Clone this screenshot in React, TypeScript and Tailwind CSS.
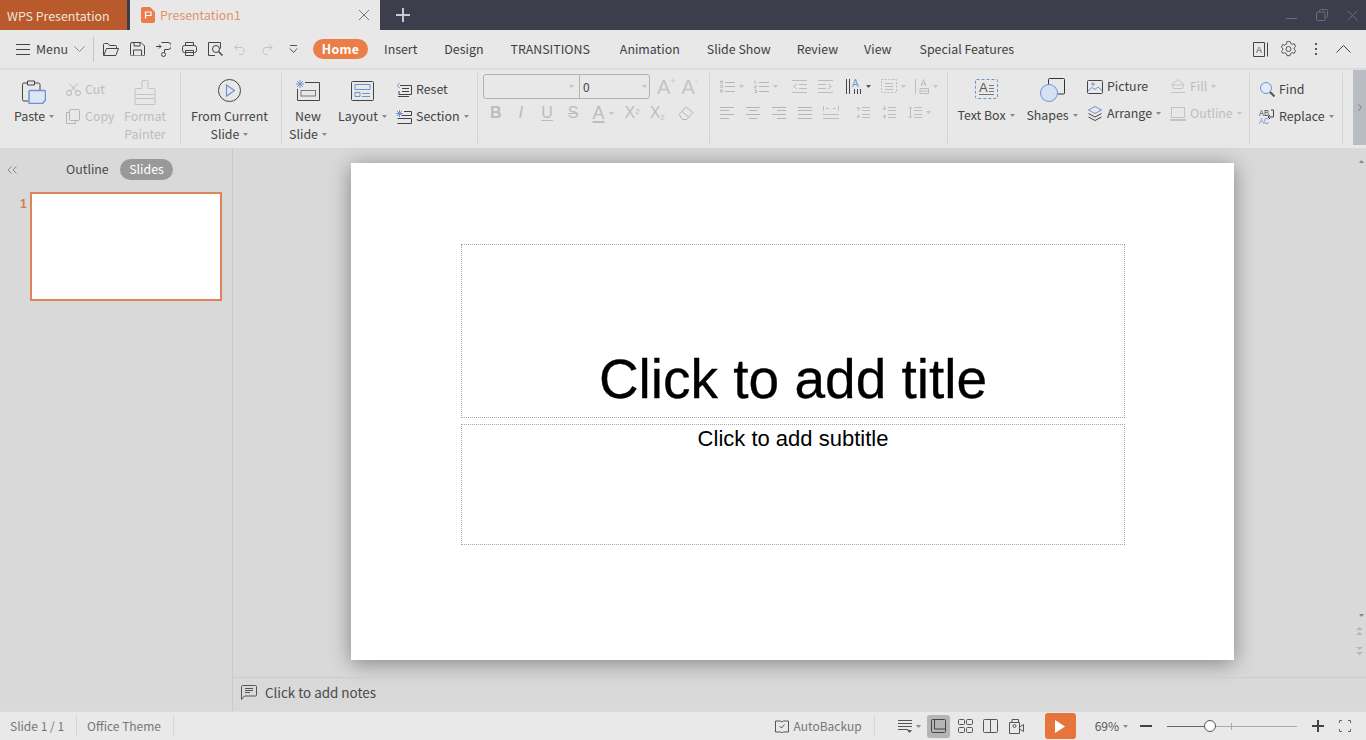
import React from "react";

const Icon = ({ w = 16, h = 16, className = "", children }: any) => (
  <svg width={w} height={h} viewBox={`0 0 ${w} ${h}`} fill="none" stroke="currentColor" strokeWidth="1" className={"shrink-0 " + className}>
    {children}
  </svg>
);

const Caret = ({ className = "text-[#8a8a8a]" }: any) => (
  <svg width="5" height="3" viewBox="0 0 5 3" className={"shrink-0 ml-[4px] " + className}>
    <path d="M0 0h5L2.500 3z" fill="currentColor" />
  </svg>
);

const Tab = ({ label, ml }: any) => <span className={"text-[12.4px] text-[#3f3f3f] " + ml}>{label}</span>;

const Sep = () => <div className="w-px h-[71px] bg-[#d3d3d3] shrink-0" />;

const SmallBtn = ({ icon, label, off, caret }: any) => (
  <div className={"h-[27px] flex items-center text-[12.4px] whitespace-nowrap " + (off ? "text-[#bdbdbd]" : "text-[#444]")}>
    {icon}
    <span className="ml-[4px]">{label}</span>
    {caret && <Caret className={off ? "text-[#c4c4c4]" : "text-[#8a8a8a]"} />}
  </div>
);

const BigBtn = ({ icon, lines, width, caret, off }: any) => (
  <div className={"flex flex-col items-center pt-[5px] text-[12.4px] leading-[18px] shrink-0 " + width + (off ? " text-[#bdbdbd]" : " text-[#444]")}>
    <div className="h-[29px] flex items-start justify-center">{icon}</div>
    {lines.map((l: string, i: number) => (
      <div key={l} className="flex items-center whitespace-nowrap">
        {l}
        {caret && i === lines.length - 1 && <Caret />}
      </div>
    ))}
  </div>
);

// small paragraph glyph made of horizontal lines
const Para = ({ rows, ml }: any) => (
  <Icon w={14} h={13} className={"text-[#b5b5b5] " + ml}>
    {rows.map((r: number[]) => (
      <path key={r[0]} d={`M${r[1]} ${r[0]}.5H${r[2]}`} />
    ))}
  </Icon>
);

export default function App() {
  return (
    <div className="w-screen h-screen overflow-hidden flex flex-col bg-[#d9d9d9] font-['Noto_Sans_CJK_SC','Noto_Sans',sans-serif]">
      {/* title bar */}
      <div className="h-[30px] shrink-0 flex bg-[#3d3e4b]">
        <div className="w-[127px] bg-[#b85a2b] text-[#f2e3da] text-[12.4px] leading-[32px] pl-[7px]">WPS Presentation</div>
        <div className="ml-[3px] w-[250px] bg-[#e8e8e8] flex items-center pl-[11px] pr-[10px]">
          <svg width="14" height="16" viewBox="0 0 14 16" className="shrink-0">
            <path d="M2 0h7l5 5v9a2 2 0 0 1-2 2H2a2 2 0 0 1-2-2V2a2 2 0 0 1 2-2z" fill="#ea7d48" />
            <path d="M4.500 11.500V5h5.500v3.500H4.500" stroke="#fff" strokeWidth="1.200" fill="none" />
          </svg>
          <span className="ml-[5px] text-[12.4px] text-[#e39368]">Presentation1</span>
          <Icon w={12} h={12} className="ml-auto text-[#777]">
            <path d="M1 1l10 10M11 1L1 11" />
          </Icon>
        </div>
        <Icon w={14} h={14} className="ml-[16px] mt-[8px] text-[#c9c9cf]">
          <path d="M7 0v14M0 7h14" strokeWidth="2" />
        </Icon>
        <div className="ml-auto flex items-center text-[#6b6c78] pr-[8px] gap-[19px]">
          <Icon w={11} h={11}>
            <path d="M0 8.500h11" />
          </Icon>
          <Icon w={12} h={12}>
            <path d="M3.500 3V1.500a1 1 0 0 1 1-1h6a1 1 0 0 1 1 1v6a1 1 0 0 1-1 1H9" />
            <rect x="0.500" y="3" width="8.500" height="8.500" rx="1" />
          </Icon>
          <Icon w={11} h={11}>
            <path d="M0.500 0.500l10 10M10.500 0.500l-10 10" />
          </Icon>
        </div>
      </div>

      {/* menu row */}
      <div className="h-[40px] shrink-0 flex items-center bg-[#e8e8e8] border-b-2 border-[#dcdcdc]">
        <Icon w={14} h={11} className="ml-[16px] text-[#444]">
          <path d="M0 .5h14M0 5.500h14M0 10.500h14" />
        </Icon>
        <span className="ml-[6px] w-[31px] text-[12.4px] text-[#444]">Menu</span>
        <Icon w={11} h={6} className="ml-[7px] text-[#888]">
          <path d="M.5.5l5 5 5-5" />
        </Icon>
        <div className="ml-[8px] w-px h-[25px] bg-[#c4c4c4]" />
        <Icon w={16} h={13} className="ml-[9px] text-[#444]">
          <path d="M1 12.500a.5.5 0 0 1-.5-.5V1.500a1 1 0 0 1 1-1h3.500l1.500 2h6a1 1 0 0 1 1 1v1.500M.8 12.500l2.700-7h12l-2.700 7z" />
        </Icon>
        <Icon w={15} h={14} className="ml-[11px] text-[#444]">
          <path d="M.5 2a1.500 1.500 0 0 1 1.500-1.500h9l3.500 3.500v8.500a1.500 1.500 0 0 1-1.500 1.500H2A1.500 1.500 0 0 1 .5 12z" />
          <path d="M3.500 13.500V8h8v5.500M4 .5v3.500h6V.5" />
        </Icon>
        <Icon w={15} h={15} className="ml-[11px] text-[#444]">
          <path d="M0 4.500h5M3 2.500l2 2-2 2" />
          <path d="M5.500.5h6.500a2.500 2.500 0 0 1 0 7H8.500v3" />
          <circle cx="7.500" cy="12.500" r="2" />
        </Icon>
        <Icon w={15} h={14} className="ml-[11px] text-[#444]">
          <rect x=".5" y="3.500" width="14" height="7" rx="2" />
          <path d="M3.500 3.500V.5h8v3M3.500 8.500h8v5h-8z" />
        </Icon>
        <Icon w={15} h={14} className="ml-[11px] text-[#444]">
          <path d="M7 13.500H.5V.5h12v6" />
          <circle cx="8" cy="7" r="3.500" />
          <path d="M10.500 9.500l4 4" strokeWidth="1.500" />
        </Icon>
        <Icon w={13} h={11} className="ml-[11px] text-[#c4c4c4]">
          <path d="M3.500.5L.8 3.500l2.700 3M1 3.500h7a4 4 0 0 1 0 7H5" />
        </Icon>
        <Icon w={13} h={11} className="ml-[13px] text-[#c4c4c4]">
          <path d="M9.500.5l2.700 3-2.700 3M12 3.500H5a4 4 0 0 0 0 7h3" />
        </Icon>
        <Icon w={9} h={9} className="ml-[16px] text-[#555]">
          <path d="M1 .5h7M.8 3.500l3.700 4 3.700-4" />
        </Icon>
        <div className="ml-[15px] w-[55px] h-[20px] rounded-full bg-[#ea7d48] text-white text-[12.4px] font-bold flex items-center justify-center tracking-[0.3px]">Home</div>
        <Tab label="Insert" ml="ml-[16px]" />
        <Tab label="Design" ml="ml-[27px]" />
        <Tab label="TRANSITIONS" ml="ml-[27px]" />
        <Tab label="Animation" ml="ml-[30px]" />
        <Tab label="Slide Show" ml="ml-[27px]" />
        <Tab label="Review" ml="ml-[26px]" />
        <Tab label="View" ml="ml-[26px]" />
        <Tab label="Special Features" ml="ml-[28px]" />
        <div className="ml-auto flex items-center text-[#444] pr-[15px]">
          <Icon w={15} h={15}>
            <path d="M.5.5h11v14H.5zM14.500.5v14" />
            <text x="3" y="11" fontSize="9" fill="#555" stroke="none" fontFamily="Liberation Sans">A</text>
          </Icon>
          <Icon w={15} h={16} className="ml-[13px] text-[#555]">
            <path d="M6 .8h3l.5 2 1.800 1 2-.6 1.300 2.800-1.500 1.400v1.200l1.500 1.400-1.300 2.800-2-.6-1.800 1-.5 2H6l-.5-2-1.800-1-2 .6L.4 10.800l1.500-1.400V8.200L.4 6.800 1.700 4l2 .6 1.800-1z" transform="translate(0 -.5)" />
            <circle cx="7.500" cy="8" r="2.500" />
          </Icon>
          <div className="ml-[19px] flex flex-col gap-[3px]">
            <div className="w-[2px] h-[2px] bg-[#555]" />
            <div className="w-[2px] h-[2px] bg-[#555]" />
            <div className="w-[2px] h-[2px] bg-[#555]" />
          </div>
          <Icon w={15} h={8} className="ml-[19px]">
            <path d="M.5 7.500l7-7 7 7" />
          </Icon>
        </div>
      </div>

      {/* ribbon */}
      <div className="h-[78px] shrink-0 flex items-start bg-[#e8e8e8] pt-[3px]">
        {/* clipboard */}
        <div className="w-[180px] flex shrink-0">
          <BigBtn
            width="w-[42px] ml-[13px]"
            caret
            lines={["Paste"]}
            icon={
              <Icon w={24} h={24} className="text-[#444] mt-[2px]">
                <path d="M5 3H2a1.500 1.500 0 0 0-1.500 1.500v15A1.500 1.500 0 0 0 2 21h4" />
                <path d="M13 3h3.500A1.500 1.500 0 0 1 18 4.500V10M5.500 1h7v4h-7z" />
                <path d="M7 11.500a1 1 0 0 1 1-1h14.500a1 1 0 0 1 1 1V20l-3 3.500H8a1 1 0 0 1-1-1z" fill="#dce6f6" stroke="#6f93cf" strokeWidth="1.500" />
              </Icon>
            }
          />
          <div className="ml-[11px] w-[57px] shrink-0 pt-[3px]">
            <SmallBtn
              off
              label="Cut"
              icon={
                <Icon w={15} h={13} className="text-[#b5b5b5]">
                  <circle cx="3" cy="10" r="2.500" />
                  <circle cx="12" cy="10" r="2.500" />
                  <path d="M4.500 8L12 .5M10.500 8L3 .5" />
                </Icon>
              }
            />
            <SmallBtn
              off
              label="Copy"
              icon={
                <Icon w={14} h={15} className="text-[#b5b5b5] mr-[1px]">
                  <rect x="3.500" y=".5" width="10" height="11" rx="1" />
                  <path d="M3.500 3.500H.5v11h9v-3" />
                </Icon>
              }
            />
          </div>
          <BigBtn
            off
            width="w-[44px]"
            lines={["Format", "Painter"]}
            icon={
              <Icon w={22} h={25} className="text-[#c4c4c4] mt-[2px]">
                <path d="M8 8.500V1.500a1 1 0 0 1 1-1h4a1 1 0 0 1 1 1v7h6a1 1 0 0 1 1 1v5H1v-5a1 1 0 0 1 1-1zM1 14.500v10h20v-10M1 18.500h20" />
              </Icon>
            }
          />
        </div>
        <Sep />
        {/* slide show */}
        <div className="w-[100px] flex justify-center pr-[3px] shrink-0">
          <BigBtn
            width="w-[80px]"
            caret
            lines={["From Current", "Slide"]}
            icon={
              <Icon w={23} h={23} className="text-[#444] mt-[1px]">
                <circle cx="11.500" cy="11.500" r="11" />
                <path d="M8.500 6l8 5.500-8 5.500z" stroke="#6f93cf" strokeWidth="1.200" />
              </Icon>
            }
          />
        </div>
        <Sep />
        {/* slides */}
        <div className="w-[195px] flex shrink-0">
          <BigBtn
            width="w-[36px] ml-[8px]"
            caret
            lines={["New", "Slide"]}
            icon={
              <Icon w={24} h={21} className="text-[#444] mt-[2px]">
                <path d="M9 2.500h14.500v18H1.500V9" />
                <rect x="5" y="10.500" width="14.500" height="5.500" stroke="#777" />
                <path d="M4 0v8M0 4h8M1 1l6 6M7 1L1 7" stroke="#6f93cf" />
              </Icon>
            }
          />
          <BigBtn
            width="w-[47px] ml-[13px]"
            caret
            lines={["Layout"]}
            icon={
              <Icon w={23} h={20} className="text-[#444] mt-[3px]">
                <rect x=".5" y=".5" width="22" height="19" rx="1" />
                <path d="M4 3.500h15v5H4zM4 11.500h5v4H4zM11 12.500h8M11 15.500h8" stroke="#6f93cf" />
              </Icon>
            }
          />
          <div className="ml-[10px] pt-[3px] shrink-0">
            <SmallBtn
              label="Reset"
              icon={
                <Icon w={16} h={14} className="text-[#444]">
                  <path d="M4 2.500h11.500v9H3V8" />
                  <path d="M6 5.500h7M6 8.500h7M2 13.500h11" />
                  <path d="M3.500 0L1.500 2.500 3.500 5" stroke="#6f93cf" />
                </Icon>
              }
            />
            <SmallBtn
              caret
              label="Section"
              icon={
                <Icon w={16} h={14} className="text-[#444]">
                  <path d="M8 1.500h7.500v4H6M1.500 8.500h14v5H1.500" />
                  <path d="M3.500 0v7M0 3.500h7M1 1l5 5M6 1L1 6" stroke="#6f93cf" />
                </Icon>
              }
            />
          </div>
        </div>
        <Sep />
        {/* font */}
        <div className="w-[231px] shrink-0 pl-[5px] pt-[1px]">
          <div className="flex items-center">
            <div className="w-[167px] h-[25px] border border-[#b3b3b3] rounded-[3px] flex text-[12px] text-[#444] shrink-0">
              <div className="w-[96px] border-r border-[#b3b3b3] flex items-center justify-end pr-[5px]">
                <Caret className="text-[#c4c4c4]" />
              </div>
              <div className="flex-1 flex items-center pl-[3px]">
                0<Caret className="ml-auto mr-[2px] text-[#c4c4c4]" />
              </div>
            </div>
            <span className="ml-[7px] text-[#c4c4c4] text-[20px] leading-[20px] font-['Liberation_Sans',sans-serif] flex items-start">
              A<span className="text-[9px] leading-[9px]">+</span>
            </span>
            <span className="ml-[6px] text-[#c4c4c4] text-[20px] leading-[20px] font-['Liberation_Sans',sans-serif] flex items-start">
              A<span className="text-[9px] leading-[9px]">-</span>
            </span>
          </div>
          <div className="h-[26px] mt-[1px] flex items-center text-[#bdbdbd] font-['Liberation_Sans',sans-serif] text-[16px]">
            <span className="ml-[7px] font-bold">B</span>
            <span className="ml-[17px] italic text-[17px]">I</span>
            <span className="ml-[18px] underline underline-offset-2">U</span>
            <span className="ml-[15px] line-through">S</span>
            <span className="ml-[14px] text-[18px] underline decoration-2 underline-offset-2">A</span>
            <Caret className="text-[#c4c4c4]" />
            <span className="ml-[11px]">
              X<sup className="text-[8px]">2</sup>
            </span>
            <span className="ml-[10px]">
              X<sub className="text-[8px]">2</sub>
            </span>
            <Icon w={16} h={14} className="ml-[13px] text-[#b5b5b5]">
              <path d="M1 8.500l7-7.500 7 5.500-6.500 7H4.500zM4 5.500l6.500 5.500" />
            </Icon>
          </div>
        </div>
        <Sep />
        {/* paragraph */}
        <div className="w-[237px] shrink-0 pl-[10px] pt-[3px]">
          <div className="h-[20px] flex items-center">
            <Icon w={15} h={13} className="text-[#b5b5b5]">
              <circle cx="1.500" cy="2" r="1.300" />
              <circle cx="1.500" cy="6.500" r="1.300" />
              <circle cx="1.500" cy="11" r="1.300" />
              <path d="M5 2.500h10M5 6.500h10M5 11.500h10" />
            </Icon>
            <Caret className="text-[#c4c4c4]" />
            <Icon w={15} h={13} className="ml-[10px] text-[#b5b5b5]">
              <path d="M1 .5v3M.5 6h2l-2 2h2M.5 10.500h2v2h-2M5 2.500h10M5 6.500h10M5 11.500h10" />
            </Icon>
            <Caret className="text-[#c4c4c4]" />
            <Icon w={15} h={13} className="ml-[14px] text-[#bdbdbd]">
              <path d="M0 .5h15M7 4.500h8M7 8.500h8M0 12.500h15M5 4L1.500 6.500 5 9" />
            </Icon>
            <Icon w={15} h={13} className="ml-[11px] text-[#bdbdbd]">
              <path d="M0 .5h15M0 4.500h8M0 8.500h8M0 12.500h15M10 4l3.500 2.500L10 9" />
            </Icon>
            <Icon w={16} h={15} className="ml-[13px] text-[#444]">
              <path d="M.5 0v15M3.500 0v15M8.500 10v5M11.500 10v5M14.500 10v5" />
              <text x="6" y="8" fontSize="10" fill="#6f93cf" stroke="none" fontFamily="Liberation Sans">A</text>
            </Icon>
            <Caret className="text-[#555]" />
            <Icon w={16} h={14} className="ml-[10px] text-[#bdbdbd]">
              <path d="M.5.5h15v13H.5z" strokeDasharray="2 1.500" />
              <path d="M4 4.500h8M4 7.500h8M4 10.500h8" />
            </Icon>
            <Caret className="text-[#c4c4c4]" />
            <Icon w={14} h={15} className="ml-[9px] text-[#bdbdbd]">
              <path d="M.5 0v15M6 7l2.500-6.500L11 7M6.500 5h4M5 9.500h8.500v5H5zM5 12h8.500" />
            </Icon>
            <Caret className="text-[#c4c4c4]" />
          </div>
          <div className="h-[14px] mt-[9px] flex items-center">
            <Para ml="" rows={[[1, 0, 14], [4, 0, 9], [8, 0, 14], [12, 0, 9]]} />
            <Para ml="ml-[12px]" rows={[[1, 0, 14], [4, 3, 11], [8, 0, 14], [12, 3, 11]]} />
            <Para ml="ml-[12px]" rows={[[1, 0, 14], [4, 5, 14], [8, 0, 14], [12, 5, 14]]} />
            <Para ml="ml-[12px]" rows={[[1, 0, 14], [4, 0, 14], [8, 0, 14], [12, 0, 14]]} />
            <Icon w={16} h={13} className="ml-[11px] text-[#bdbdbd]">
              <path d="M.5 0v5M15.500 0v5M3 2.500h3M13 2.500h-3M0 8.500h16M0 12.500h16" />
            </Icon>
            <Icon w={14} h={13} className="ml-[17px] text-[#bdbdbd]">
              <path d="M2.500 1v4M.8 2.800l1.700-1.800 1.700 1.800M2.500 8v4M.8 10.200l1.700 1.800 1.700-1.800M6 1.500h8M6 4.500h8M6 8.500h8M6 11.500h8" />
            </Icon>
            <Icon w={14} h={13} className="ml-[12px] text-[#bdbdbd]">
              <path d="M2.500 0v4M.8 2.200l1.700 1.800 1.700-1.800M2.500 13V9M.8 10.800l1.700-1.800 1.700 1.800M6 1.500h8M6 4.500h8M6 8.500h8M6 11.500h8" />
            </Icon>
            <Icon w={14} h={13} className="ml-[12px] text-[#bdbdbd]">
              <path d="M2.500 1v11M.8 2.800l1.700-1.800 1.700 1.800M.8 10.200l1.700 1.800 1.700-1.800M6 1.500h8M6 4.500h8M6 8.500h8M6 11.500h8" />
            </Icon>
            <Caret className="text-[#c4c4c4]" />
          </div>
        </div>
        <Sep />
        {/* insert */}
        <div className="w-[301px] flex shrink-0 -mt-[1px]">
          <BigBtn
            width="w-[58px] ml-[9px]"
            caret
            lines={["Text Box"]}
            icon={
              <Icon w={24} h={21} className="mt-[2px] ml-[1px] text-[#6f93cf]">
                <rect x=".5" y=".5" width="22" height="19" rx="1" strokeDasharray="3 2" />
                <text x="4" y="13" fontSize="13" fill="#555" stroke="none" fontFamily="Liberation Sans">A</text>
                <path d="M14 6.500h5M14 9.500h5M14 12.500h5M4 15.500h15" stroke="#777" />
              </Icon>
            }
          />
          <BigBtn
            width="w-[50px] ml-[12px]"
            caret
            lines={["Shapes"]}
            icon={
              <Icon w={25} h={24} className="text-[#333] mt-px">
                <path d="M8.500 7V1.500a1 1 0 0 1 1-1h14a1 1 0 0 1 1 1V15a1 1 0 0 1-1 1H18" />
                <circle cx="9" cy="15" r="8.500" fill="#d5e0f2" stroke="#6f93cf" />
              </Icon>
            }
          />
          <div className="ml-[10px] w-[83px] shrink-0 pt-[1px]">
            <SmallBtn
              label="Picture"
              icon={
                <Icon w={16} h={14} className="text-[#444]">
                  <rect x=".5" y=".5" width="15" height="13" rx="1" />
                  <circle cx="6" cy="4" r="1.200" stroke="#6f93cf" />
                  <path d="M1 11l4-3.500 3 2 3-2.500 4 3.500" stroke="#6f93cf" />
                </Icon>
              }
            />
            <SmallBtn
              caret
              label="Arrange"
              icon={
                <Icon w={16} h={15} className="text-[#444]">
                  <path d="M8 .5L14.500 4 8 7.500 1.500 4z" stroke="#6f93cf" />
                  <path d="M1.500 7.500L8 11l6.500-3.500M1.500 11L8 14.500l6.500-3.500" />
                </Icon>
              }
            />
          </div>
          <div className="shrink-0 pt-[1px]">
            <SmallBtn
              off
              caret
              label="Fill"
              icon={
                <Icon w={16} h={15} className="text-[#c4c4c4]">
                  <path d="M8 .5l6 5-1.500 4h-9L2 5.500zM2 6h12M1 13.500h14" />
                </Icon>
              }
            />
            <SmallBtn
              off
              caret
              label="Outline"
              icon={
                <Icon w={16} h={14} className="text-[#c4c4c4]">
                  <rect x="1.500" y=".5" width="13" height="10" />
                  <path d="M0 13h16" strokeWidth="2" />
                </Icon>
              }
            />
          </div>
        </div>
        <Sep />
        {/* find */}
        <div className="w-[92px] shrink-0 pl-[10px] pt-[3px]">
          <SmallBtn
            label="Find"
            icon={
              <Icon w={15} h={15} className="text-[#6f93cf]">
                <circle cx="6" cy="6" r="5.500" fill="#e3ebf7" />
                <path d="M10 10l4.500 4.500" stroke="#555" strokeWidth="2" />
              </Icon>
            }
          />
          <SmallBtn
            caret
            label="Replace"
            icon={
              <Icon w={16} h={17} className="text-[#444] -ml-[1px]">
                <text x="0" y="8" fontSize="9" textLength="10" lengthAdjust="spacingAndGlyphs" fill="#444" stroke="none" fontFamily="Liberation Sans">AB</text>
                <text x="0" y="16" fontSize="9" textLength="10" lengthAdjust="spacingAndGlyphs" fill="#6f93cf" stroke="none" fontFamily="Liberation Sans">AC</text>
                <path d="M12 2h2.500v7H9M11 7L9 9l2 2" />
              </Icon>
            }
          />
        </div>
        <Sep />
        <div className="ml-auto w-[13px] h-[75px] -mt-[3px] bg-[#babcc4] flex items-center justify-center text-[#777]">
          <Icon w={4} h={7}>
            <path d="M.5.5l3 3-3 3" />
          </Icon>
        </div>
      </div>

      {/* body */}
      <div className="flex-1 min-h-0 flex">
        <aside className="w-[233px] shrink-0 border-r border-[#c9c9c9] pt-[11px]">
          <div className="h-[21px] flex items-center text-[12.4px]">
            <Icon w={10} h={8} className="ml-[7px] text-[#8a8a8a]">
              <path d="M4.500.5L1 4l3.500 3.500M9.500.5L6 4l3.500 3.500" />
            </Icon>
            <span className="ml-[49px] w-[40px] text-[#4a4a4a]">Outline</span>
            <span className="ml-[14px] w-[53px] h-[21px] rounded-full bg-[#999] text-white flex items-center justify-center">Slides</span>
          </div>
          <div className="mt-[12px] flex items-start">
            <span className="ml-[20px] w-[10px] text-[12px] font-bold leading-[24px] text-[#d27c50] font-['Liberation_Sans',sans-serif]">1</span>
            <div className="w-[192px] h-[109px] bg-white border-2 border-[#dd845a]" />
          </div>
        </aside>
        <main className="flex-1 min-w-0 flex flex-col">
          <div className="flex-1 min-h-0 flex">
            <div className="flex-1 min-w-0 pt-[15px] pl-[118px]">
              <div className="w-[883px] h-[497px] bg-white shadow-[0_3px_20px_rgba(0,0,0,0.4)] pt-[81px] pl-[110px]">
                <div className="w-[664px] h-[174px] border border-dotted border-[#a5a5a5] flex items-end justify-center pb-[7px] font-['Liberation_Sans',sans-serif] text-[55px] leading-[62px] text-black [-webkit-text-stroke:0.3px_black]">
                  Click to add title
                </div>
                <div className="mt-[6px] w-[664px] h-[121px] border border-dotted border-[#a5a5a5] pt-px text-center font-['Liberation_Sans',sans-serif] text-[22px] leading-[26px] text-black">
                  Click to add subtitle
                </div>
              </div>
            </div>
            <div className="w-[13px] shrink-0 flex flex-col items-center pt-[12px]">
              <Caret className="text-[#888] ml-0 rotate-180" />
              <Caret className="text-[#888] ml-0 mt-[451px]" />
              <Icon w={7} h={10} className="mt-[10px] text-[#b5b5b5]">
                <path d="M3.500 0L7 3H0zM3.500 5L7 8H0z" fill="currentColor" stroke="none" />
              </Icon>
              <Icon w={7} h={10} className="mt-[8px] text-[#b5b5b5]">
                <path d="M0 2h7L3.500 5zM0 7h7L3.500 10z" fill="currentColor" stroke="none" />
              </Icon>
            </div>
          </div>
          <div className="h-[34px] shrink-0 border-t border-[#cccccc] flex items-center pb-[5px] text-[13.4px] text-[#4a4a4a]">
            <Icon w={16} h={15} className="ml-[8px] text-[#555]">
              <path d="M.5 14.500V1.500a1 1 0 0 1 1-1h13a1 1 0 0 1 1 1V10a1 1 0 0 1-1 1H3.500z" />
              <path d="M4 3.500h8M4 5.500h8M4 7.500h5" />
            </Icon>
            <span className="ml-[8px]">Click to add notes</span>
          </div>
        </main>
      </div>

      {/* status bar */}
      <div className="h-[29px] shrink-0 bg-[#e9e9e9] border-t border-[#dcdcdc] flex items-center text-[12px] text-[#777]">
        <span className="ml-[10px]">Slide 1 / 1</span>
        <div className="ml-[12px] w-px h-[22px] bg-[#d6d6d6]" />
        <span className="ml-[10px]">Office Theme</span>
        <div className="ml-[12px] w-px h-[22px] bg-[#d6d6d6]" />
        <div className="ml-auto flex items-center pr-[15px]">
          <Icon w={14} h={13} className="text-[#555]">
            <path d="M.5 1h5l1.500 1 1.500-1h5v11h-5l-1.500 1-1.500-1h-5z" />
            <path d="M4.500 6l2 2 3-3.500" />
          </Icon>
          <span className="ml-[5px]">AutoBackup</span>
          <div className="ml-[12px] w-px h-[22px] bg-[#d6d6d6]" />
          <Icon w={14} h={13} className="ml-[23px] text-[#555]">
            <path d="M0 .5h14M0 3.500h14M0 6.500h14M0 9.500h10" />
            <path d="M9 10h5l-2.500 3z" fill="currentColor" stroke="none" />
          </Icon>
          <Caret />
          <div className="ml-[6px] w-[23px] h-[23px] rounded-[3px] bg-[#b5b5b5] flex items-center justify-center text-[#444]">
            <Icon w={15} h={14}>
              <rect x=".5" y=".5" width="14" height="13" rx="1" />
              <path d="M3.500.5v9.500h11" />
            </Icon>
          </div>
          <Icon w={15} h={14} className="ml-[8px] text-[#555]">
            <rect x=".5" y=".5" width="6" height="5" rx="1" />
            <rect x="8.500" y=".5" width="6" height="5" rx="1" />
            <rect x=".5" y="8.500" width="6" height="5" rx="1" />
            <rect x="8.500" y="8.500" width="6" height="5" rx="1" />
          </Icon>
          <Icon w={15} h={14} className="ml-[10px] text-[#555]">
            <rect x=".5" y=".5" width="14" height="13" rx="1" />
            <path d="M7.500.5v13" />
          </Icon>
          <Icon w={15} h={16} className="ml-[11px] text-[#555]">
            <path d="M3 4V1.500h6.500V4M.5 4.500h10v11H.5zM10.500 9l4-2.500v7l-4-2.500" />
            <circle cx="5.500" cy="8" r="1.500" />
          </Icon>
          <div className="ml-[21px] w-[31px] h-[26px] rounded-[3px] bg-[#e8743d] flex items-center justify-center">
            <svg width="10" height="13" viewBox="0 0 10 13">
              <path d="M0 0l10 6.500L0 13z" fill="#fff" />
            </svg>
          </div>
          <span className="ml-[19px] text-[#555]">69%</span>
          <Caret />
          <div className="ml-[12px] w-[12px] h-[2px] bg-[#444]" />
          <div className="ml-[15px] w-[130px] h-[13px] flex items-center">
            <div className="w-[37px] h-px bg-[#666]" />
            <div className="w-[12px] h-[12px] rounded-full border border-[#555] bg-white shrink-0" />
            <div className="w-[15px] h-px bg-[#aaa]" />
            <div className="w-px h-[7px] bg-[#aaa]" />
            <div className="flex-1 h-px bg-[#aaa]" />
          </div>
          <Icon w={12} h={12} className="ml-[15px] text-[#444]">
            <path d="M6 0v12M0 6h12" strokeWidth="2" />
          </Icon>
          <Icon w={12} h={12} className="ml-[15px] text-[#666]">
            <path d="M.5 3V.5H3M9 .5h2.500V3M11.500 9v2.500H9M3 11.500H.5V9" />
          </Icon>
        </div>
      </div>
    </div>
  );
}
